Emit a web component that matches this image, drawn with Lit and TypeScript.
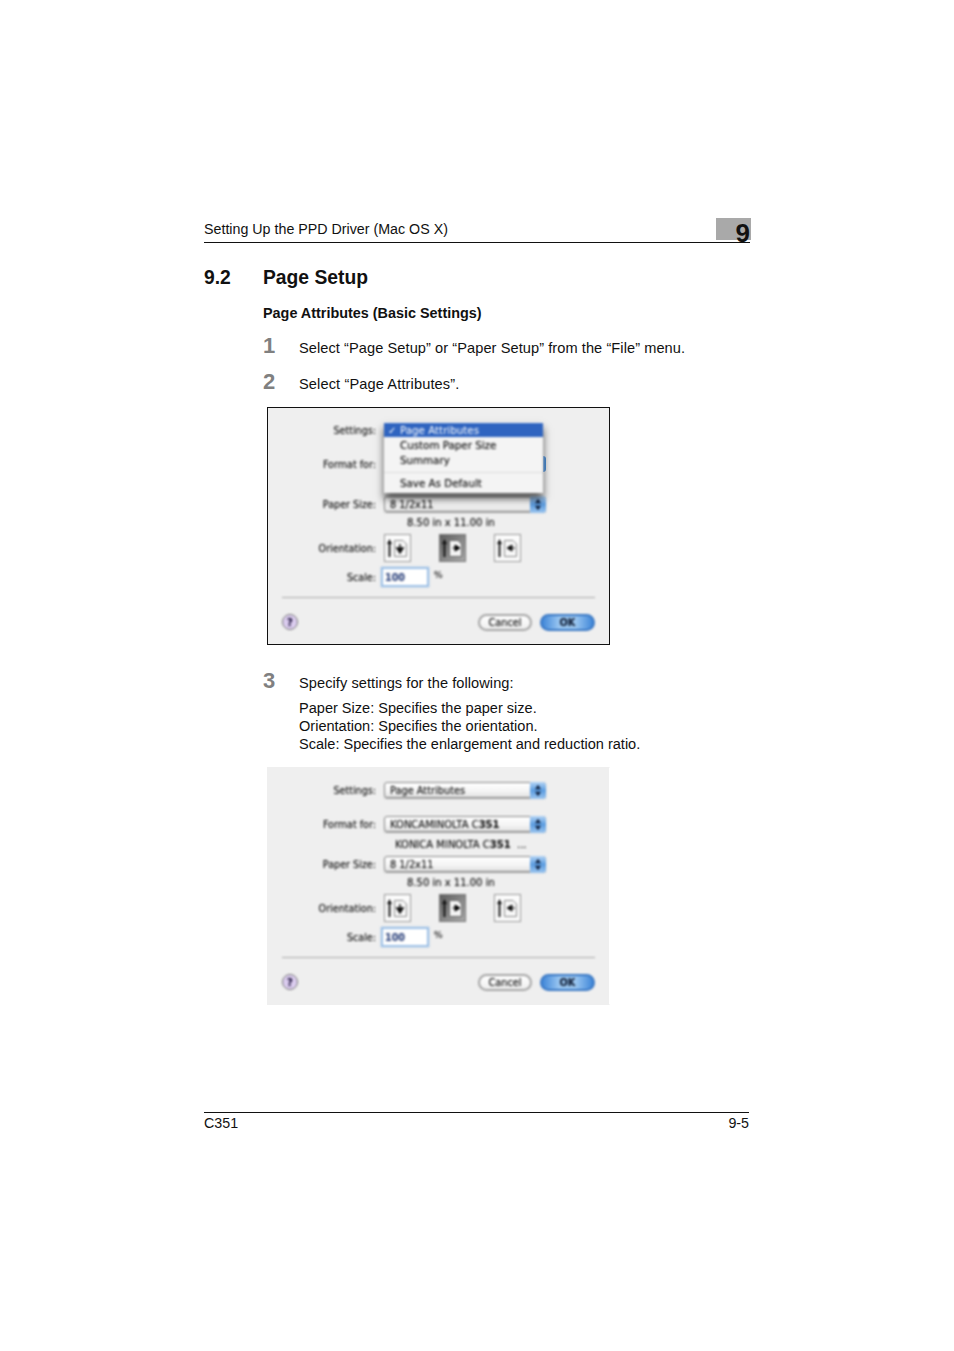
import { LitElement, html, css, svg } from "lit";
import { customElement, property } from "lit/decorators.js";

const stepper = svg`<svg class="st" width="16" height="17" viewBox="0 0 16 17"><path d="M8 2.8 5 7.2h6zM8 14.2 5 9.8h6z" fill="#10213f"/></svg>`;

function orient(kind: number) {
  const arrow =
    kind === 0
      ? svg`<path d="M16 10v8M12.8 14 16 19l3.2-5z" fill="#111" stroke="#111" stroke-width="1.4"/>`
      : kind === 1
      ? svg`<path d="M13.5 14H17M16 11 21 14l-5 3z" fill="#000" stroke="#000"/>`
      : svg`<path d="M14.5 14H21M18 11 13 14l5 3z" fill="#111" stroke="#111"/>`;
  return svg`<svg width="27" height="28" viewBox="0 0 27 28">
    <path d="M5.5 23V9" stroke="#111" stroke-width="1.9"/>
    <path d="M3 10 5.5 5 8 10z" fill="#111"/>
    <path d="M10.5 6.5H19l3.5 3.5V22.5h-12z" fill="${kind === 1 ? "#f4f4f4" : "#f8f8f8"}" stroke="${kind === 1 ? "#666" : "#8a8a8a"}"/>
    ${arrow}
  </svg>`;
}

@customElement("page-dialog")
class PageDialog extends LitElement {
  @property({ type: Boolean }) open = false;
  static styles = css`
    :host { display: block; width: 100%; height: 100%; background: #efefef; position: relative; font-family: "DejaVu Sans", sans-serif; font-size: 9.6px; color: #1c1c1c; overflow: hidden; }
    .inner { filter: blur(0.8px); display: flex; flex-direction: column; height: 100%; text-shadow: 0 0 1px rgba(0,0,0,.45); }
    .row { display: flex; align-items: center; }
    .lab { width: 108px; flex: none; text-align: right; color: #1c1c1c; }
    .r1 { margin-top: 14px; height: 16px; }
    .r2 { margin-top: 18px; height: 16px; }
    .r3 { margin-top: 4px; height: 16px; }
    .r4 { margin-top: 4px; height: 16px; }
    .r5 { margin-top: 4px; height: 12px; padding-left: 139px; font-size: 10px; }
    .r6 { margin-top: 6px; height: 28px; }
    .r7 { margin-top: 5px; height: 20px; }
    .sep { margin: 10px 14px 0 14px; height: 1px; background: #aaa; flex: none; }
    .r8 { margin-top: 14px; height: 20px; padding: 0 14px 0 14px; justify-content: space-between; }
    .sel { margin-left: 8px; width: 162px; height: 16px; box-sizing: border-box; border: 1px solid #888; border-radius: 3px; background: linear-gradient(#fff, #f4f4f4 60%, #e2e2e2); display: flex; align-items: center; padding-left: 5px; position: relative; font-size: 9.8px; box-shadow: 0 1px 1px #aaa; }
    .st { position: absolute; right: -1px; top: -1px; background: linear-gradient(#b4d4f5, #5b9ce0 50%, #9cc5ef); border-radius: 0 3px 3px 0; }
    .sel.k { font-size: 10px; }
    .printer { margin-left: 127px; font-size: 10px; white-space: pre; }
    .strong { font-weight: 700; }
    .ob { display: flex; width: 137px; justify-content: space-between; margin-left: 8px; }
    .o { width: 27px; height: 28px; box-sizing: border-box; border: 1px solid #999; background: #fbfbfb; display: block; }
    .o svg { display: block; margin: -1px; }
    .o.on { background: linear-gradient(135deg, #5e5e5e, #8a8a8a 55%, #a8a8a8); border-color: #777; }
    .scale { margin-left: 5px; width: 48px; height: 20px; box-sizing: border-box; border: 2px solid #9dc0e6; background: #fff; padding-left: 2px; color: #3d5490; font-weight: 700; display: flex; align-items: center; box-shadow: 0 0 1px #6d9fd6; }
    .pct { margin-left: 5px; margin-top: -4px; font-size: 8.5px; font-weight: 700; color: #666; }
    .help { width: 16px; height: 16px; border-radius: 50%; border: 1px solid #777; box-sizing: border-box; background: #dccdf0; color: #1f1440; font-weight: 700; font-size: 10px; display: flex; align-items: center; justify-content: center; }
    .btns { display: flex; gap: 8px; align-items: center; }
    .b { height: 17px; box-sizing: border-box; border-radius: 9px; display: flex; align-items: center; justify-content: center; font-size: 9.8px; }
    .cancel { width: 54px; background: linear-gradient(#fff, #efefef); border: 2px solid #a5a5a5; }
    .ok { width: 55px; background: linear-gradient(90deg, #3f86d8, #9cc8f2 35%, #9cc8f2 65%, #3f86d8); border: 2px solid #3a78c4; color: #14233f; font-weight: 700; }
    .menu { position: absolute; left: 116px; top: 14px; width: 159px; height: 71px; background: #f4f4f4; box-shadow: 0 6px 8px rgba(0,0,0,.65); filter: blur(0.8px); font-size: 10.3px; text-shadow: 0 0 1px rgba(0,0,0,.45); }
    .mi { height: 15px; padding-left: 16px; display: flex; align-items: center; color: #1c1c1c; }
    .mi.sel2 { background: #2f64c0; color: #fff; position: relative; margin-top: 1px; height: 14px; text-shadow: none; }
    .mi.sel2 i { position: absolute; left: 4px; font-style: normal; font-size: 10px; font-weight: 700; color: #fff; }
    .msep { height: 1px; background: #ddd; margin: 5px 0 2px; }
    .stub { position: absolute; left: 275px; top: 48px; width: 3px; height: 16px; background: #4f93dc; border-radius: 0 3px 3px 0; filter: blur(0.4px); }
    .hid { visibility: hidden; }
  `;
  render() {
    return html`<div class="inner">
        <div class="row r1"><span class="lab">Settings:</span><div class="sel ${this.open ? "hid" : ""}">Page Attributes${stepper}</div></div>
        <div class="row r2"><span class="lab">Format for:</span><div class="sel k ${this.open ? "hid" : ""}">KONCAMINOLTA C<b class="strong">351</b>${stepper}</div></div>
        <div class="row r3"><span class="printer ${this.open ? "hid" : ""}">KONICA MINOLTA C<b class="strong">351</b>  ...</span></div>
        <div class="row r4"><span class="lab">Paper Size:</span><div class="sel">8 1/2x11${stepper}</div></div>
        <div class="row r5"><span>8.50 in x 11.00 in</span></div>
        <div class="row r6"><span class="lab">Orientation:</span><div class="ob"><div class="o">${orient(0)}</div><div class="o on">${orient(1)}</div><div class="o">${orient(2)}</div></div></div>
        <div class="row r7"><span class="lab">Scale:</span><div class="scale">100</div><span class="pct">%</span></div>
        <div class="sep"></div>
        <div class="row r8"><div class="help">?</div><div class="btns"><div class="b cancel">Cancel</div><div class="b ok">OK</div></div></div>
      </div>
      ${this.open
        ? html`<div class="stub"></div><div class="menu">
            <div class="mi sel2"><i>✓</i>Page Attributes</div>
            <div class="mi">Custom Paper Size</div>
            <div class="mi">Summary</div>
            <div class="msep"></div>
            <div class="mi">Save As Default</div>
          </div>`
        : ""}`;
  }
}

@customElement("app-root")
class AppRoot extends LitElement {
  static styles = css`
    :host { display: block; width: 954px; height: 1351px; background: #fff; font-family: "Liberation Sans", Arial, sans-serif; color: #111; overflow: hidden; }
    .page { width: 546px; margin-left: 204px; padding-top: 218px; }
    .head { height: 24px; border-bottom: 1px solid #111; display: flex; justify-content: space-between; position: relative; font-size: 14.25px; }
    .head span { margin-top: 3px; line-height: 17px; }
    .tab { position: absolute; right: -1px; top: 0; width: 35px; height: 22px; background: #a9a9a9; }
    .num { position: absolute; right: 0; top: 2px; font-size: 26px; font-weight: 700; line-height: 26px; color: #111; }
    h1 { margin: 0; padding-top: 23px; font-size: 19.3px; line-height: 24px; font-weight: 700; display: flex; }
    h1 .n { width: 59px; }
    .body { padding-left: 59px; }
    h2 { margin: 14px 0 0; font-size: 14.4px; line-height: 18px; font-weight: 700; }
    .step { display: grid; grid-template-columns: 36px 1fr; font-size: 14.6px; line-height: 18px; }
    .step b { font-size: 22px; line-height: 20px; color: #808080; margin-top: -3px; }
    .s1 { margin-top: 17px; }
    .s1 span { letter-spacing: 0.07px; }
    .s2 { margin-top: 18px; }
    .s2 span { letter-spacing: 0.12px; }
    .s3 { margin-top: 29px; }
    .s3 span { letter-spacing: 0.06px; }
    .d1 { margin: 14px 0 0 4px; border: 1px solid #111; width: 343px; height: 238px; box-sizing: border-box; }
    .d2 { margin: 14px 0 0 4px; border: 1px solid #efefef; border-right-color: #fff; width: 343px; height: 238px; box-sizing: border-box; }
    .note { margin: 7px 0 0 36px; font-size: 14.55px; line-height: 18px; }
    .foot { margin-top: 107px; border-top: 1px solid #111; display: flex; justify-content: space-between; font-size: 14.25px; line-height: 18px; padding-top: 1px; width: 545px; }
  `;
  render() {
    return html`<div class="page">
      <div class="head"><span>Setting Up the PPD Driver (Mac OS X)</span><div class="tab"></div><div class="num">9</div></div>
      <h1><span class="n">9.2</span><span>Page Setup</span></h1>
      <div class="body">
        <h2>Page Attributes (Basic Settings)</h2>
        <div class="step s1"><b>1</b><span>Select “Page Setup” or “Paper Setup” from the “File” menu.</span></div>
        <div class="step s2"><b>2</b><span>Select “Page Attributes”.</span></div>
        <div class="d1"><page-dialog open></page-dialog></div>
        <div class="step s3"><b>3</b><span>Specify settings for the following:</span></div>
        <div class="note">Paper Size: Specifies the paper size.<br />Orientation: Specifies the orientation.<br />Scale: Specifies the enlargement and reduction ratio.</div>
        <div class="d2"><page-dialog></page-dialog></div>
      </div>
      <div class="foot"><span>C351</span><span>9-5</span></div>
    </div>`;
  }
}
